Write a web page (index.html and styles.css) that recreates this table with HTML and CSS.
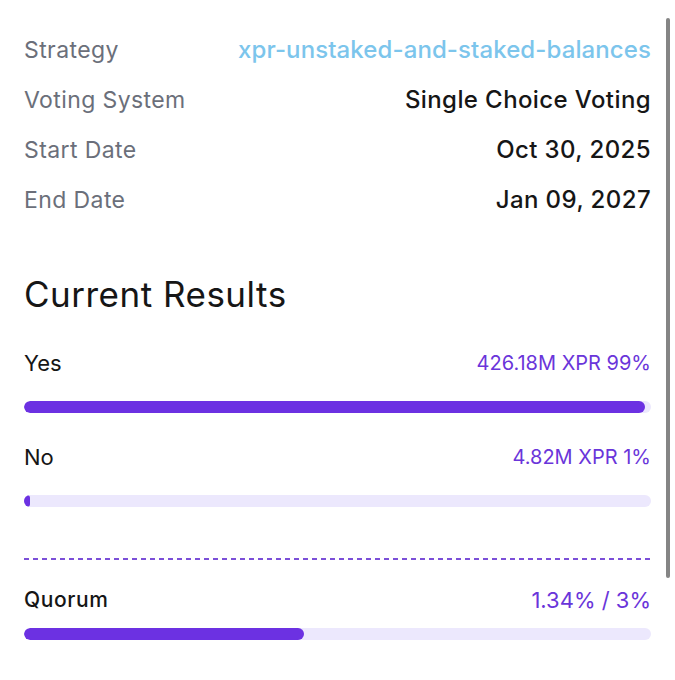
FILE: index.html
```html
<!DOCTYPE html>
<html>
<head>
<meta charset="utf-8">
<link rel="stylesheet" href="styles.css">
</head>
<body>
<div class="panel">
  <div class="details">
    <div class="row"><span class="label">Strategy</span><span class="value link">xpr-unstaked-and-staked-balances</span></div>
    <div class="row"><span class="label">Voting System</span><span class="value">Single Choice Voting</span></div>
    <div class="row"><span class="label">Start Date</span><span class="value">Oct 30, 2025</span></div>
    <div class="row"><span class="label">End Date</span><span class="value">Jan 09, 2027</span></div>
  </div>
  <h2 class="heading">Current Results</h2>
  <div class="results">
    <div class="choice">
      <div class="choice-head"><span class="choice-name">Yes</span><span class="choice-val">426.18M XPR 99%</span></div>
      <div class="track"><div class="fill" style="width: 99%"></div></div>
    </div>
    <div class="choice">
      <div class="choice-head"><span class="choice-name">No</span><span class="choice-val">4.82M XPR 1%</span></div>
      <div class="track"><div class="fill" style="width: 1%"></div></div>
    </div>
  </div>
  <div class="divider"></div>
  <div class="quorum">
    <div class="choice-head"><span class="quorum-name">Quorum</span><span class="choice-val">1.34% / 3%</span></div>
    <div class="track"><div class="fill" style="width: 44.7%"></div></div>
  </div>
</div>
<div class="scrollbar"></div>
</body>
</html>
```
FILE: styles.css
```css
html, body {
  margin: 0;
  padding: 0;
  background: #ffffff;
}
body {
  font-family: Inter, "Noto Sans", sans-serif;
  color: #1a1a1a;
  width: 675px;
  height: 680px;
  overflow: hidden;
  position: relative;
}
.panel {
  padding: 25px 24px 0 24px;
}
.row {
  display: flex;
  justify-content: space-between;
  align-items: baseline;
  height: 50px;
  line-height: 50px;
}
.label {
  font-size: 23px;
  letter-spacing: 0.4px;
  color: #6b6f7a;
}
.value {
  font-size: 24px;
  font-weight: 500;
  letter-spacing: 0.4px;
  color: #161616;
}
.value.link {
  color: #7cc5ec;
  letter-spacing: 0.1px;
}
.heading {
  margin: 48px 0 0 0;
  font-size: 35px;
  line-height: 42px;
  font-weight: 400;
  letter-spacing: 0.5px;
  color: #161616;
}
.results {
  margin-top: 33px;
  display: flex;
  flex-direction: column;
  gap: 29px;
}
.choice-head {
  display: flex;
  justify-content: space-between;
  align-items: center;
  height: 30px;
  line-height: 30px;
}
.choice-name {
  font-size: 22px;
  color: #161616;
}
.choice-val {
  font-size: 20px;
  color: #6a35da;
}
.track {
  margin-top: 23px;
  height: 12px;
  border-radius: 6px;
  background: #ece8fd;
  overflow: hidden;
}
.fill {
  height: 100%;
  border-radius: 6px;
  background: #6c31e2;
}
.divider {
  margin-top: 51px;
  height: 2px;
  background: repeating-linear-gradient(to right, #7b4fd8 0 5px, transparent 5px 9px);
}
.quorum {
  margin-top: 25px;
}
.quorum-name {
  font-size: 21px;
  font-weight: 500;
  letter-spacing: 0.6px;
  color: #161616;
}
.quorum .choice-val {
  font-size: 22px;
}
.quorum .track {
  margin-top: 13px;
}
.scrollbar {
  position: absolute;
  left: 666px;
  top: 18px;
  width: 4px;
  height: 560px;
  border-radius: 2px;
  background: #858585;
}
```
